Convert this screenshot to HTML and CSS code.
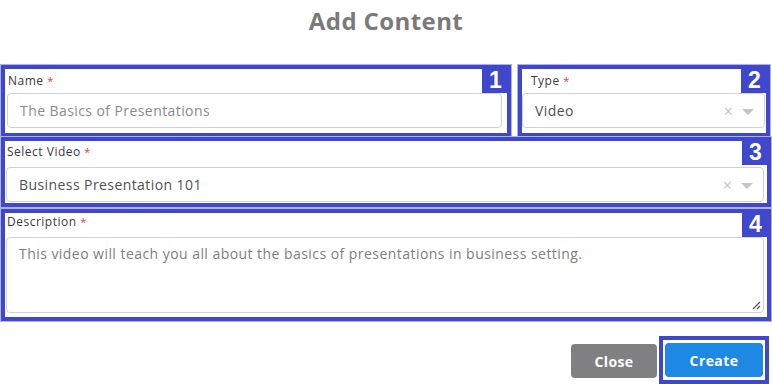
FILE: index.html
```html
<!DOCTYPE html>
<html>
<head>
<meta charset="utf-8">
<link rel="stylesheet" href="styles.css">
</head>
<body>
<div class="modal">
  <h1 class="title">Add Content</h1>
  <div class="form">
    <div class="row">
      <div class="box box-top">
        <label class="label">Name <span class="req">*</span></label>
        <div class="input placeholder">The Basics of Presentations</div>
        <span class="badge">1</span>
      </div>
      <div class="box box-top box-type">
        <label class="label">Type <span class="req">*</span></label>
        <div class="input select">
          <span class="value">Video</span>
          <span class="icons"><span class="clear">×</span><span class="caret"></span></span>
        </div>
        <span class="badge">2</span>
      </div>
    </div>
    <div class="box box-video">
      <label class="label">Select Video <span class="req">*</span></label>
      <div class="input select">
        <span class="value">Business Presentation 101</span>
        <span class="icons"><span class="clear">×</span><span class="caret"></span></span>
      </div>
      <span class="badge">3</span>
    </div>
    <div class="box box-desc">
      <label class="label">Description <span class="req">*</span></label>
      <div class="textarea">This video will teach you all about the basics of presentations in business setting.
        <svg class="grip" width="9" height="9" viewBox="0 0 9 9"><path d="M1 8 L8 1 M5 8 L8 5" stroke="#555" stroke-width="1.2" fill="none"/></svg>
      </div>
      <span class="badge">4</span>
    </div>
    <div class="actions">
      <button class="btn btn-close">Close</button>
      <div class="outline"><button class="btn btn-create">Create</button></div>
    </div>
  </div>
</div>
</body>
</html>
```

FILE: styles.css
```css
* { box-sizing: border-box; }
html, body { margin: 0; padding: 0; background: #fff; }
body { font-family: "Open Sans", "Noto Sans", sans-serif; width: 772px; height: 384px; overflow: hidden; }

.title {
  margin: 0;
  padding-top: 6px;
  height: 65px;
  line-height: 30px;
  text-align: center;
  font-size: 24px;
  font-weight: 700;
  color: #7a7a7a;
  letter-spacing: 0.4px;
}

.form { padding: 0 1px 0 1px; }

.row {
  display: grid;
  grid-template-columns: 510px 252px;
  column-gap: 7px;
}

.box {
  position: relative;
  border: 4px solid #3f47cc;
  box-shadow: 0 0 0 1px #aeb2e8;
  background: #fff;
}

.box-top { height: 72px; padding: 4px 5px 5px 2px; }
.box-type { padding-left: 0; padding-right: 1px; }
.box-type .label { padding-left: 9px; }

.box-video { height: 70px; padding: 3px 3px 1px 1px; }
.box-desc { height: 112px; margin-top: 2px; padding: 1px 3px 4px 1px; }

.label {
  display: block;
  font-size: 12px;
  line-height: 16px;
  height: 16px;
  color: #3a3a3a;
  padding-left: 1px;
  letter-spacing: 0.5px;
}
.req { color: #e53935; font-size: 11px; }
.box-top .label { margin-bottom: 4px; }
.box-video .label, .box-desc .label { margin-bottom: 7px; }

.input {
  height: 35px;
  border: 1px solid #cfd0d6;
  border-radius: 4px;
  padding: 0 12px;
  font-size: 14px;
  line-height: 33px;
  color: #555;
  display: flex;
  align-items: center;
  letter-spacing: 0.42px;
}
.placeholder { color: #8a8a8a; }
.select { justify-content: space-between; padding-right: 10px; }
.value { color: #505050; }
.icons { display: flex; align-items: center; gap: 9px; letter-spacing: 0; }
.clear { color: #c4c4c4; font-size: 16px; line-height: 16px; }
.caret {
  width: 0; height: 0;
  border-left: 6px solid transparent;
  border-right: 6px solid transparent;
  border-top: 6px solid #c4c4c4;
  margin-top: 2px;
}

.textarea {
  position: relative;
  height: 76px;
  border: 1px solid #cfd0d6;
  border-radius: 4px;
  padding: 5px 12px;
  font-size: 14px;
  line-height: 22px;
  color: #7e7e7e;
  letter-spacing: 0.45px;
}
.grip { position: absolute; right: 2px; bottom: 2px; }

.badge {
  position: absolute;
  top: -2px;
  right: -2px;
  width: 27px;
  height: 26px;
  background: #3f47cc;
  color: #fff;
  font-family: "Liberation Sans", Arial, sans-serif;
  font-weight: 700;
  font-size: 23px;
  line-height: 26px;
  text-align: center;
}

.actions {
  display: flex;
  justify-content: flex-end;
  align-items: center;
  gap: 2px;
  margin-top: 15px;
  padding-right: 2px;
}
.btn {
  border: none;
  border-radius: 4px;
  color: #fff;
  font-family: "Open Sans", sans-serif;
  font-weight: 700;
  font-size: 14px;
  letter-spacing: 0.4px;
  height: 34px;
  cursor: pointer;
}
.btn-close { width: 86px; background: #808083; margin-top: 2px; }
.outline {
  border: 4px solid #3f47cc;
  padding: 3px 2px;
  display: flex;
}
.btn-create { width: 98px; background: #1e88e5; }
```
